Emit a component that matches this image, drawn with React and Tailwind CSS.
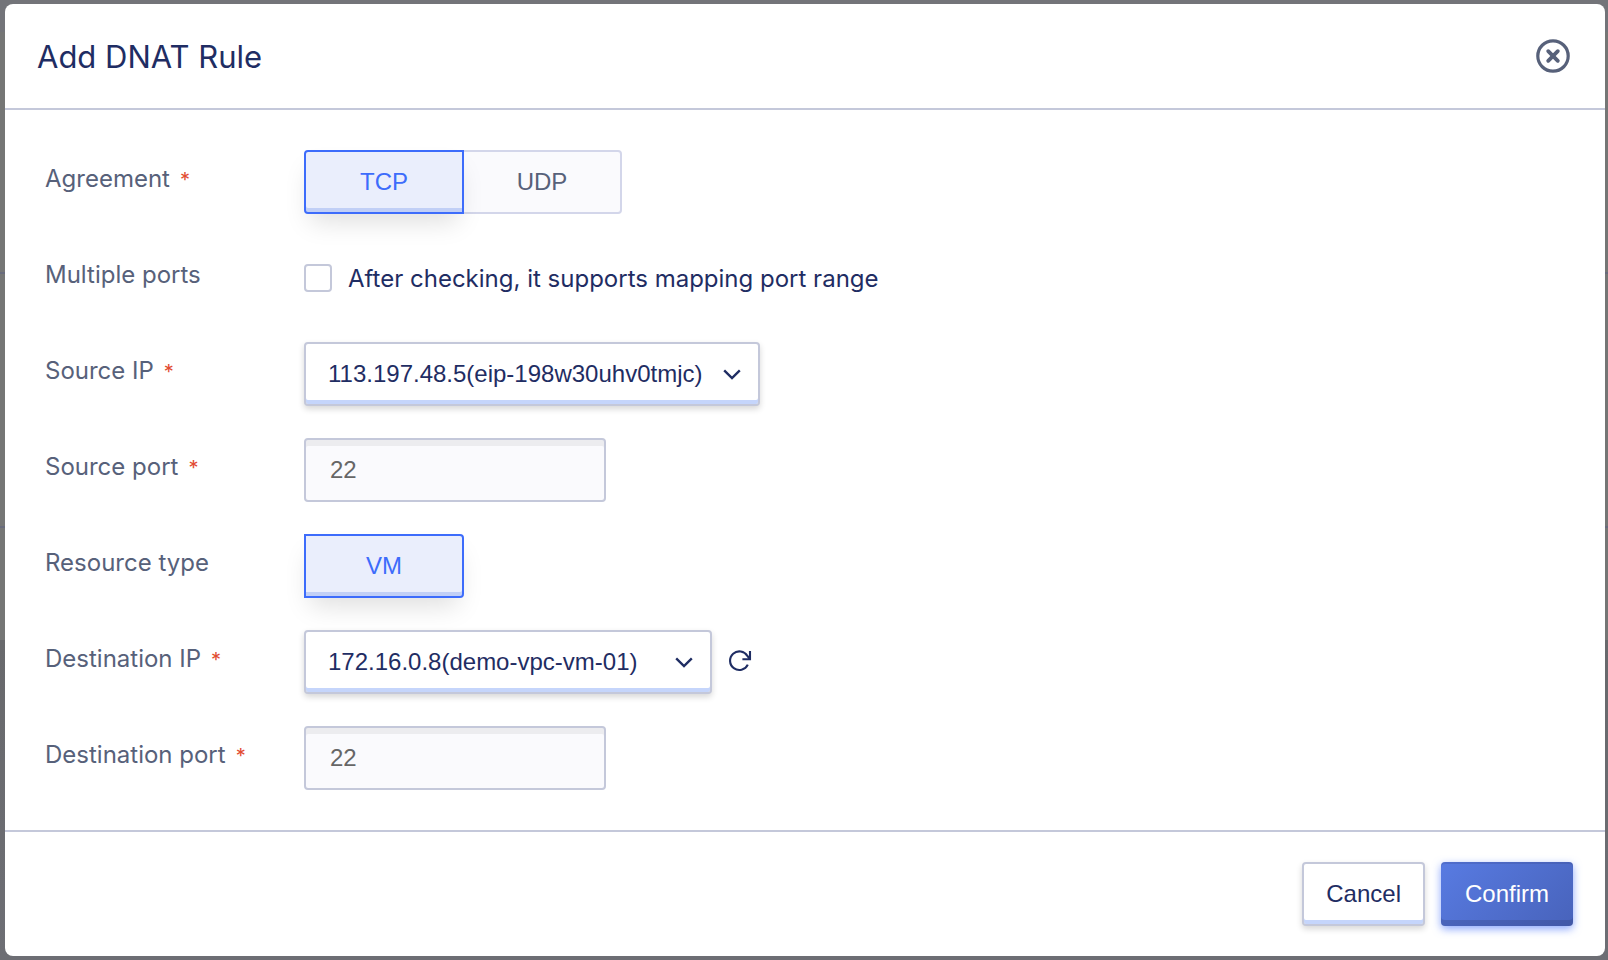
import { useState } from "react";

const fieldBase =
  "h-16 rounded border-2 border-[#c4c8da] font-['Liberation_Sans',Arial,sans-serif] text-2xl";

function Label({ htmlFor, id, required, children }) {
  return (
    <label htmlFor={htmlFor} id={id} className="w-[259px] shrink-0 pt-[13px] text-2xl text-[#57617a]">
      {children}
      {required && <span className="ml-2.5 text-xl text-[#e24b32]">*</span>}
    </label>
  );
}

function Segment({ active, className, children, ...rest }) {
  return (
    <button
      type="button"
      aria-pressed={active}
      className={
        "h-16 w-40 border-2 font-['Liberation_Sans',Arial,sans-serif] text-2xl " +
        (active
          ? "relative border-[#3d6cfb] bg-[#eaeefc] text-[#3d6cfb] shadow-[inset_0_-4px_0_#c1cff6,0_14px_26px_-6px_rgba(0,0,0,0.13)] "
          : "border-[#d3d6ea] bg-[#fafafd] text-[#57617a] ") +
        className
      }
      {...rest}
    >
      {children}
    </button>
  );
}

function Select({ id, className, children }) {
  return (
    <div className={"relative " + className}>
      <select
        id={id}
        className={
          fieldBase +
          " w-full appearance-none bg-white pl-[22px] pr-12 text-[#1f2d63] shadow-[inset_0_-4px_0_#c5d5fb,0_3px_6px_rgba(0,0,0,0.16)]"
        }
      >
        {children}
      </select>
      <svg
        className="pointer-events-none absolute right-[18px] top-[22px] h-5 w-5"
        viewBox="0 0 20 20"
        fill="none"
        stroke="#1f2d63"
        strokeWidth="2.4"
        aria-hidden="true"
      >
        <path d="M2.2 6.4 10 14l7.8-7.6" />
      </svg>
    </div>
  );
}

function PortInput({ id }) {
  return (
    <input
      id={id}
      type="text"
      defaultValue="22"
      readOnly
      className={
        fieldBase + " w-[302px] bg-[#fafafd] px-6 text-[#666666] shadow-[inset_0_6px_0_#ececef]"
      }
    />
  );
}

function Backdrop() {
  return (
    <div aria-hidden="true" className="absolute inset-0 flex flex-col bg-[#757675]">
      <div className="h-8 bg-[#737479]" />
      <div className="h-[242px] border-b-2 border-[#686b7c]" />
      <div className="h-[254px] border-b-2 border-[#686b7c]" />
      <div className="h-[112px]" />
      <div className="flex-1 bg-gradient-to-b from-[#68696c] to-[#6d6e74]" />
    </div>
  );
}

export default function App() {
  const [protocol, setProtocol] = useState("TCP");
  return (
    <div className="relative flex min-h-screen flex-col py-1 pl-[5px] pr-[3px] font-['Inter',sans-serif]">
      <Backdrop />
      <section
        role="dialog"
        aria-labelledby="dialog-title"
        className="relative flex flex-1 flex-col rounded-lg bg-white"
      >
        <header className="flex h-[106px] items-center justify-between border-b-2 border-[#c4c8da] pl-8 pr-[35px]">
          <h1 id="dialog-title" className="pt-0.5 text-[31px] leading-10 text-[#1f2d63]">
            Add DNAT Rule
          </h1>
          <button type="button" aria-label="Close">
            <svg className="h-[34px] w-[34px]" viewBox="0 0 34 34" fill="none" stroke="#57617a" strokeLinecap="round">
              <circle cx="17" cy="17" r="15.2" strokeWidth="3.2" />
              <path d="m12.2 12.2 9.6 9.6M21.8 12.2l-9.6 9.6" strokeWidth="3.8" />
            </svg>
          </button>
        </header>

        <form id="dnat-form" className="flex flex-1 flex-col gap-8 px-10 pt-10" onSubmit={(e) => e.preventDefault()}>
          <div className="flex" role="group" aria-labelledby="agreement">
            <Label id="agreement" required>Agreement</Label>
            <div className="flex">
              <Segment active={protocol === "TCP"} className="rounded-l" onClick={() => setProtocol("TCP")}>
                TCP
              </Segment>
              <Segment active={protocol === "UDP"} className="-ml-0.5 rounded-r" onClick={() => setProtocol("UDP")}>
                UDP
              </Segment>
            </div>
          </div>
          <div className="flex h-16">
            <Label htmlFor="multiple-ports">Multiple ports</Label>
            <div className="flex items-center gap-4">
              <input
                id="multiple-ports"
                type="checkbox"
                className="h-7 w-7 appearance-none rounded border-2 border-[#c4c8da] bg-white checked:bg-[#3d6cfb]"
              />
              <label htmlFor="multiple-ports" className="pt-0.5 text-2xl text-[#1f2d63]">
                After checking, it supports mapping port range
              </label>
            </div>
          </div>
          <div className="flex">
            <Label htmlFor="source-ip" required>Source IP</Label>
            <Select id="source-ip" className="w-[456px]">
              <option>113.197.48.5(eip-198w30uhv0tmjc)</option>
            </Select>
          </div>
          <div className="flex">
            <Label htmlFor="source-port" required>Source port</Label>
            <PortInput id="source-port" />
          </div>
          <div className="flex" role="group" aria-labelledby="resource-type">
            <Label id="resource-type">Resource type</Label>
            <Segment active className="rounded-r">VM</Segment>
          </div>
          <div className="flex">
            <Label htmlFor="destination-ip" required>Destination IP</Label>
            <Select id="destination-ip" className="w-[408px]">
              <option>172.16.0.8(demo-vpc-vm-01)</option>
            </Select>
            <button type="button" aria-label="Refresh" className="ml-4 pb-1">
              <svg className="h-6 w-6" viewBox="0 0 24 24" fill="none" stroke="#1f2d63" strokeWidth="2.1" aria-hidden="true">
                <path d="M19.8 16.6A9.3 9.3 0 1 1 19.4 8L21.8 11" />
                <path d="M22 3v8.2h-7.6" />
              </svg>
            </button>
          </div>
          <div className="flex">
            <Label htmlFor="destination-port" required>Destination port</Label>
            <PortInput id="destination-port" />
          </div>
        </form>

        <footer className="flex h-[126px] justify-end gap-4 border-t-2 border-[#c4c8da] pr-8 pt-[30px] font-['Liberation_Sans',Arial,sans-serif] text-2xl">
          <button
            type="button"
            className="h-16 rounded border-2 border-[#c4c8da] bg-white px-[22px] text-[#1f2d63] shadow-[inset_0_-4px_0_#c5d5fb,0_3px_6px_rgba(0,0,0,0.16)]"
          >
            Cancel
          </button>
          <button
            type="submit"
            form="dnat-form"
            className="h-16 rounded bg-linear-135 from-[#587be2] to-[#4863bb] px-6 text-white shadow-[inset_0_-6px_0_rgba(50,60,120,0.28),inset_0_2px_0_rgba(50,60,120,0.2),0_3px_8px_rgba(61,108,251,0.6)]"
          >
            Confirm
          </button>
        </footer>
      </section>
    </div>
  );
}
